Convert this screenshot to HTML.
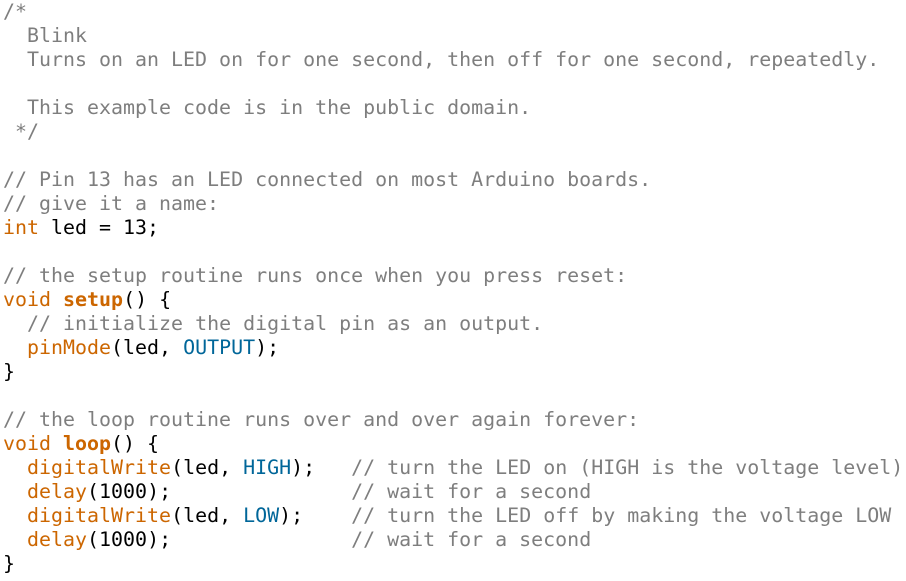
<!DOCTYPE html>
<html><head><style>
html,body{margin:0;padding:0;background:#fff;width:906px;height:581px;overflow:hidden}
pre{margin:0;position:absolute;left:3px;top:-1px;font-family:"DejaVu Sans Mono","Liberation Mono",monospace;font-size:19.95px;line-height:24px;color:#000}
.c{color:#7e7e7e}.k{color:#cc6600}.b{color:#cc6600;font-weight:bold}.o{color:#006699}
</style></head><body><pre><span class="c">/*
  Blink
  Turns on an LED on for one second, then off for one second, repeatedly.

  This example code is in the public domain.
 */</span>

<span class="c">// Pin 13 has an LED connected on most Arduino boards.</span>
<span class="c">// give it a name:</span>
<span class="k">int</span> led = 13;

<span class="c">// the setup routine runs once when you press reset:</span>
<span class="k">void</span> <span class="b">setup</span>() {
  <span class="c">// initialize the digital pin as an output.</span>
  <span class="k">pinMode</span>(led, <span class="o">OUTPUT</span>);
}

<span class="c">// the loop routine runs over and over again forever:</span>
<span class="k">void</span> <span class="b">loop</span>() {
  <span class="k">digitalWrite</span>(led, <span class="o">HIGH</span>);   <span class="c">// turn the LED on (HIGH is the voltage level)</span>
  <span class="k">delay</span>(1000);               <span class="c">// wait for a second</span>
  <span class="k">digitalWrite</span>(led, <span class="o">LOW</span>);    <span class="c">// turn the LED off by making the voltage LOW</span>
  <span class="k">delay</span>(1000);               <span class="c">// wait for a second</span>
}</pre></body></html>
